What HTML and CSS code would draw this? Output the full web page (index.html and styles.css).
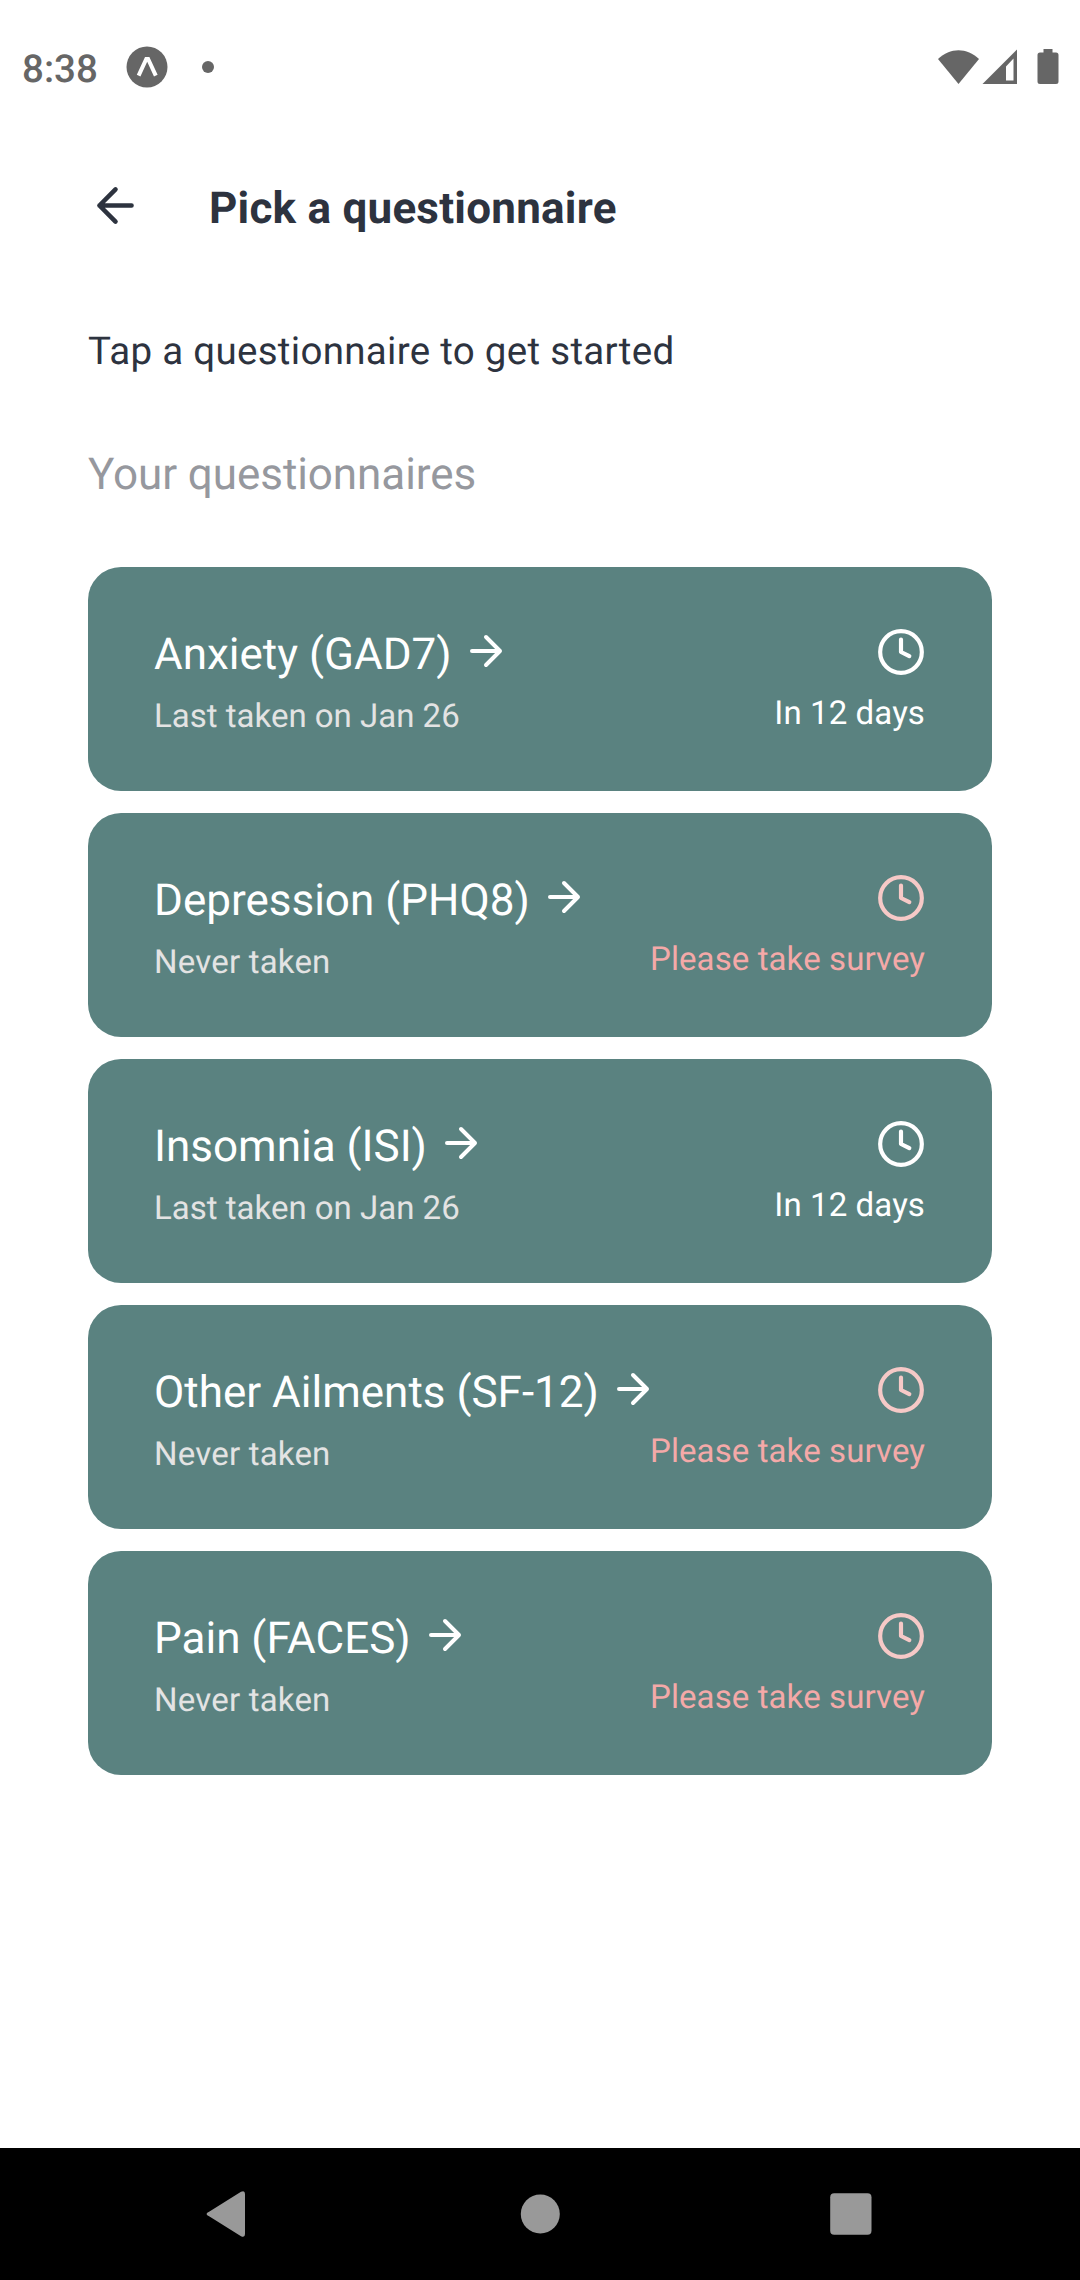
FILE: index.html
```html
<!DOCTYPE html>
<html lang="en">
<head>
<meta charset="utf-8">
<title>Pick a questionnaire</title>
<link rel="stylesheet" href="styles.css">
</head>
<body>
<svg width="0" height="0" class="defs">
  <symbol id="arrow" viewBox="0 0 24 24"><path d="M5 12h14M12 5l7 7-7 7"/></symbol>
  <symbol id="clock" viewBox="0 0 24 24"><circle cx="12" cy="12" r="10"/><path d="M12 6v6l4 2"/></symbol>
</svg>
<div class="screen">
  <div class="status">
    <span class="time">8:38</span>
    <svg class="app" viewBox="0 0 42 42"><circle cx="21" cy="21" r="20.5" fill="#666"/><path d="M12.6 29.6 20.3 13h1.8l7.7 16.6" fill="none" stroke="#fff" stroke-width="4"/></svg>
    <span class="dot"></span>
    <svg class="signals" viewBox="0 0 122 36" fill="#666"><path d="M0 10C12-1.700 29-1.700 41 10L20.500 35z"/><path fill-rule="evenodd" d="M44.500 35 79 .5V35zM68 17.500V31.500h7.500V9.500z"/><path d="M105.500 0h9v3.500h3.500a2.500 2.500 0 0 1 2.500 2.500v26.500a2.500 2.500 0 0 1-2.500 2.500h-16a2.500 2.500 0 0 1-2.500-2.500V6a2.500 2.500 0 0 1 2.500-2.500h3.500z"/></svg>
  </div>
  <header class="header">
    <svg class="icon back"><use href="#arrow"/></svg>
    <h1>Pick a questionnaire</h1>
  </header>
  <main>
    <p class="intro">Tap a questionnaire to get started</p>
    <h2>Your questionnaires</h2>
    <div class="list">
      <div class="card">
        <div class="info"><div class="name"><span>Anxiety (GAD7)</span><svg class="icon go"><use href="#arrow"/></svg></div><div class="sub">Last taken on Jan 26</div></div>
        <div class="due"><svg class="icon clock"><use href="#clock"/></svg><span>In 12 days</span></div>
      </div>
      <div class="card">
        <div class="info"><div class="name"><span>Depression (PHQ8)</span><svg class="icon go"><use href="#arrow"/></svg></div><div class="sub never">Never taken</div></div>
        <div class="due now"><svg class="icon clock"><use href="#clock"/></svg><span>Please take survey</span></div>
      </div>
      <div class="card">
        <div class="info"><div class="name"><span>Insomnia (ISI)</span><svg class="icon go"><use href="#arrow"/></svg></div><div class="sub">Last taken on Jan 26</div></div>
        <div class="due"><svg class="icon clock"><use href="#clock"/></svg><span>In 12 days</span></div>
      </div>
      <div class="card">
        <div class="info"><div class="name"><span>Other Ailments (SF-12)</span><svg class="icon go"><use href="#arrow"/></svg></div><div class="sub never">Never taken</div></div>
        <div class="due now"><svg class="icon clock"><use href="#clock"/></svg><span>Please take survey</span></div>
      </div>
      <div class="card">
        <div class="info"><div class="name"><span>Pain (FACES)</span><svg class="icon go"><use href="#arrow"/></svg></div><div class="sub never">Never taken</div></div>
        <div class="due now"><svg class="icon clock"><use href="#clock"/></svg><span>Please take survey</span></div>
      </div>
    </div>
  </main>
  <nav class="nav">
    <svg viewBox="0 0 46 46"><path d="M6.500 20.500 38 .800Q42-1 42 3v40q0 4-4 2.200L6.500 25.500q-6-2.500 0-5z"/></svg>
    <svg viewBox="0 0 46 46"><circle cx="24.300" cy="23" r="19.500"/></svg>
    <svg viewBox="0 0 46 46"><rect x="2.200" y="2.200" width="41.300" height="41.600" rx="4"/></svg>
  </nav>
</div>
</body>
</html>
```
FILE: styles.css
```css
* { box-sizing: border-box; margin: 0; padding: 0; }
body { font-family: Roboto, "Noto Sans", sans-serif; background: #fff; color: #2d333f; text-rendering: geometricPrecision; }
.defs { display: none; }
.screen { width: 1080px; height: 2280px; display: flex; flex-direction: column; }

.status { height: 134px; padding-left: 22px; padding-right: 20px; display: flex; align-items: center; color: #666; }
.time { font-size: 38.5px; font-weight: 500; line-height: 46px; margin-top: 5px; width: 104px; }
.app { width: 42px; height: 42px; }
.dot { width: 12px; height: 12px; border-radius: 50%; background: #666; margin-left: 34px; }
.signals { width: 122px; height: 36px; margin-left: auto; }

.icon { fill: none; stroke: currentColor; stroke-width: 2; stroke-linecap: round; stroke-linejoin: round; flex: none; display: block; }
.header { height: 148px; padding: 44px 88px 0; display: flex; }
.back { width: 55px; height: 55px; transform: rotate(180deg); }
h1 { font-size: 44px; font-weight: 700; line-height: 52px; letter-spacing: .23px; margin: 4px 0 0 66px; }

main { flex: 1; padding: 47px 88px 0; }
.intro { font-size: 38.5px; line-height: 46px; letter-spacing: .3px; }
h2 { font-size: 44px; font-weight: 400; line-height: 52px; letter-spacing: -.07px; margin-top: 73px; color: #96989e; }
.list { display: flex; flex-direction: column; gap: 22px; margin-top: 67px; }
.card { height: 224px; border-radius: 33px; background: #5a8280; color: #fff; padding: 0 66px; display: flex; justify-content: space-between; white-space: nowrap; }
.info { padding-top: 61px; width: 0; }
.name { display: flex; font-size: 44px; line-height: 52px; }
.go { width: 48px; height: 48px; margin: -1px 0 0 10px; }
.sub { font-size: 33px; line-height: 40px; margin-top: 17px; color: #e3e3e3; }
.never { letter-spacing: .2px; }
.due { padding-top: 60px; display: flex; flex-direction: column; align-items: flex-end; font-size: 33px; line-height: 40px; }
.clock { width: 50px; height: 50px; }
.due span { margin-top: 17px; margin-right: 1px; letter-spacing: .1px; }
.now { color: #f4a9a8; }
.now .clock { color: #f6c9c7; }

.nav { height: 132px; background: #000; fill: #999; display: flex; justify-content: space-between; padding: 43px 206px 0 203px; }
.nav svg { width: 46px; height: 46px; display: block; }
```
